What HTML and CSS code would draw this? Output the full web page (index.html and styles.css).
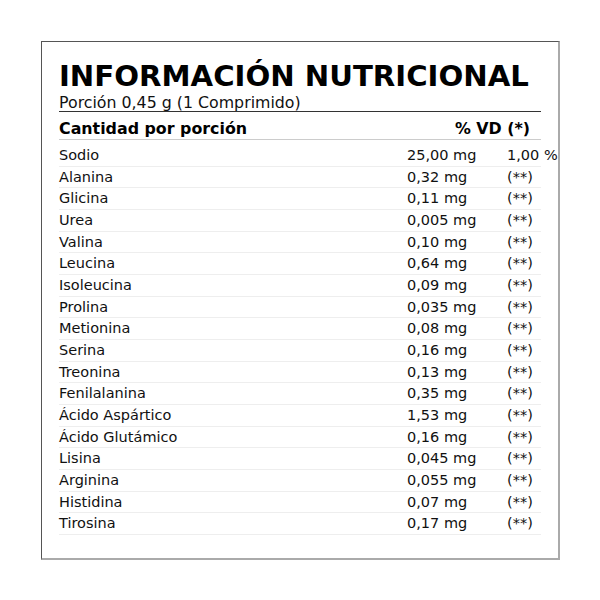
FILE: index.html
```html
<!DOCTYPE html>
<html lang="es">
<head>
<meta charset="utf-8">
<link rel="stylesheet" href="styles.css">
</head>
<body>
<div class="label">
  <h1 class="title">INFORMACIÓN NUTRICIONAL</h1>
  <div class="serving">Porción 0,45 g (1 Comprimido)</div>
  <div class="table">
    <div class="row head"><span class="name">Cantidad por porción</span><span class="vd">% VD (*)</span></div>
    <div class="row"><span class="name">Sodio</span><span class="amt">25,00 mg</span><span class="pct">1,00 %</span></div>
    <div class="row"><span class="name">Alanina</span><span class="amt">0,32 mg</span><span class="pct">(**)</span></div>
    <div class="row"><span class="name">Glicina</span><span class="amt">0,11 mg</span><span class="pct">(**)</span></div>
    <div class="row"><span class="name">Urea</span><span class="amt">0,005 mg</span><span class="pct">(**)</span></div>
    <div class="row"><span class="name">Valina</span><span class="amt">0,10 mg</span><span class="pct">(**)</span></div>
    <div class="row"><span class="name">Leucina</span><span class="amt">0,64 mg</span><span class="pct">(**)</span></div>
    <div class="row"><span class="name">Isoleucina</span><span class="amt">0,09 mg</span><span class="pct">(**)</span></div>
    <div class="row"><span class="name">Prolina</span><span class="amt">0,035 mg</span><span class="pct">(**)</span></div>
    <div class="row"><span class="name">Metionina</span><span class="amt">0,08 mg</span><span class="pct">(**)</span></div>
    <div class="row"><span class="name">Serina</span><span class="amt">0,16 mg</span><span class="pct">(**)</span></div>
    <div class="row"><span class="name">Treonina</span><span class="amt">0,13 mg</span><span class="pct">(**)</span></div>
    <div class="row"><span class="name">Fenilalanina</span><span class="amt">0,35 mg</span><span class="pct">(**)</span></div>
    <div class="row"><span class="name">Ácido Aspártico</span><span class="amt">1,53 mg</span><span class="pct">(**)</span></div>
    <div class="row"><span class="name">Ácido Glutámico</span><span class="amt">0,16 mg</span><span class="pct">(**)</span></div>
    <div class="row"><span class="name">Lisina</span><span class="amt">0,045 mg</span><span class="pct">(**)</span></div>
    <div class="row"><span class="name">Arginina</span><span class="amt">0,055 mg</span><span class="pct">(**)</span></div>
    <div class="row"><span class="name">Histidina</span><span class="amt">0,07 mg</span><span class="pct">(**)</span></div>
    <div class="row"><span class="name">Tirosina</span><span class="amt">0,17 mg</span><span class="pct">(**)</span></div>
  </div>
</div>
</body>
</html>
```
FILE: styles.css
```css
html, body {
  margin: 0;
  padding: 0;
  background: #fff;
}
body {
  padding: 41px;
  font-family: "DejaVu Sans", sans-serif;
  color: #111;
}
.label {
  width: 519px;
  height: 519px;
  box-sizing: border-box;
  border-top: 1px solid #555;
  border-left: 1px solid #555;
  border-right: 2px solid #aaa;
  border-bottom: 2px solid #aaa;
  padding: 16px 17px 0 17px;
}
.title {
  margin: 0;
  font-size: 29.2px;
  font-weight: bold;
  line-height: 36px;
  white-space: nowrap;
  color: #000;
}
.serving {
  font-size: 15.8px;
  line-height: 17px;
  border-bottom: 1px solid #333;
}
.table {
  display: flex;
  flex-direction: column;
  font-size: 14.5px;
}
.row {
  display: grid;
  grid-template-columns: 348px 100px 34px;
  line-height: 20.65px;
  border-bottom: 1px solid #eee;
  white-space: nowrap;
}
.row.head {
  font-size: 15.85px;
  font-weight: bold;
  color: #000;
  line-height: 19px;
  padding: 7px 0 1px;
  margin-bottom: 5px;
  border-bottom: 1px solid #ccc;
}
.head .vd {
  grid-column: 2 / 4;
  text-align: right;
  padding-right: 11px;
}
```
